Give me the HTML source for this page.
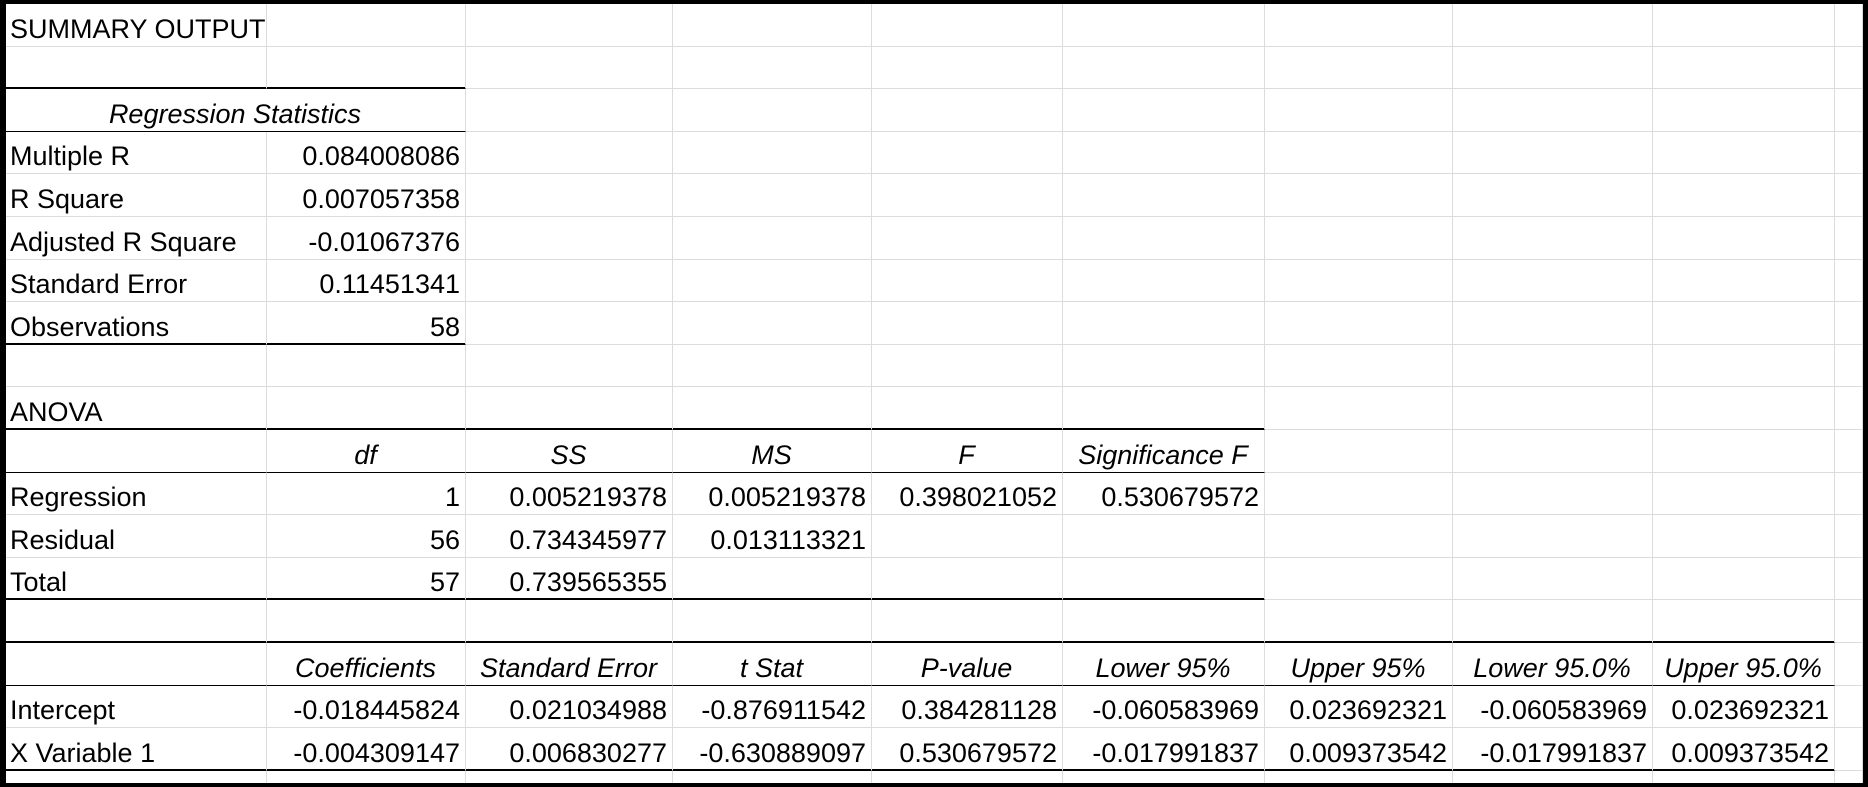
<!DOCTYPE html>
<html><head><meta charset="utf-8"><style>
html,body{margin:0;padding:0;background:#fff;}
#f{position:relative;width:1868px;height:787px;box-sizing:border-box;border:solid #000;border-width:4px 5px 4px 6px;overflow:hidden;background:#fff;}
table{position:absolute;left:0;top:0;width:1857px;border-collapse:separate;border-spacing:0;table-layout:fixed;font-family:"Liberation Sans",sans-serif;font-size:27px;color:#000;}
td{box-sizing:border-box;height:42.6px;border-right:1px solid #dcdcdc;border-bottom:1px solid #dcdcdc;padding:0 5px 0 4px;white-space:nowrap;overflow:hidden;vertical-align:bottom;line-height:34px;}
td.r{text-align:right;}
td.h{text-align:center;font-style:italic;}
td.t{border-bottom-color:#000;}
td.T{border-bottom-color:#000;box-shadow:inset 0 -1px 0 #000;}
</style></head><body><div id="f">
<table>
<colgroup><col style="width:261px"><col style="width:199px"><col style="width:207px"><col style="width:199px"><col style="width:191px"><col style="width:202px"><col style="width:188px"><col style="width:200px"><col style="width:182px"><col style="width:28px"></colgroup>
<tr><td>SUMMARY OUTPUT</td><td></td><td></td><td></td><td></td><td></td><td></td><td></td><td></td><td></td></tr>
<tr><td class="T"></td><td class="T"></td><td></td><td></td><td></td><td></td><td></td><td></td><td></td><td></td></tr>
<tr><td class="h t" colspan="2">Regression Statistics</td><td></td><td></td><td></td><td></td><td></td><td></td><td></td><td></td></tr>
<tr><td>Multiple R</td><td class="r">0.084008086</td><td></td><td></td><td></td><td></td><td></td><td></td><td></td><td></td></tr>
<tr><td>R Square</td><td class="r">0.007057358</td><td></td><td></td><td></td><td></td><td></td><td></td><td></td><td></td></tr>
<tr><td>Adjusted R Square</td><td class="r">-0.01067376</td><td></td><td></td><td></td><td></td><td></td><td></td><td></td><td></td></tr>
<tr><td>Standard Error</td><td class="r">0.11451341</td><td></td><td></td><td></td><td></td><td></td><td></td><td></td><td></td></tr>
<tr><td class="T">Observations</td><td class="r T">58</td><td></td><td></td><td></td><td></td><td></td><td></td><td></td><td></td></tr>
<tr><td></td><td></td><td></td><td></td><td></td><td></td><td></td><td></td><td></td><td></td></tr>
<tr><td class="T">ANOVA</td><td class="T"></td><td class="T"></td><td class="T"></td><td class="T"></td><td class="T"></td><td></td><td></td><td></td><td></td></tr>
<tr><td class="t"></td><td class="h t">df</td><td class="h t">SS</td><td class="h t">MS</td><td class="h t">F</td><td class="h t">Significance F</td><td></td><td></td><td></td><td></td></tr>
<tr><td>Regression</td><td class="r">1</td><td class="r">0.005219378</td><td class="r">0.005219378</td><td class="r">0.398021052</td><td class="r">0.530679572</td><td></td><td></td><td></td><td></td></tr>
<tr><td>Residual</td><td class="r">56</td><td class="r">0.734345977</td><td class="r">0.013113321</td><td></td><td></td><td></td><td></td><td></td><td></td></tr>
<tr><td class="T">Total</td><td class="r T">57</td><td class="r T">0.739565355</td><td class="T"></td><td class="T"></td><td class="T"></td><td></td><td></td><td></td><td></td></tr>
<tr><td class="T"></td><td class="T"></td><td class="T"></td><td class="T"></td><td class="T"></td><td class="T"></td><td class="T"></td><td class="T"></td><td class="T"></td><td></td></tr>
<tr><td class="t"></td><td class="h t">Coefficients</td><td class="h t">Standard Error</td><td class="h t">t Stat</td><td class="h t">P-value</td><td class="h t">Lower 95%</td><td class="h t">Upper 95%</td><td class="h t">Lower 95.0%</td><td class="h t">Upper 95.0%</td><td></td></tr>
<tr><td>Intercept</td><td class="r">-0.018445824</td><td class="r">0.021034988</td><td class="r">-0.876911542</td><td class="r">0.384281128</td><td class="r">-0.060583969</td><td class="r">0.023692321</td><td class="r">-0.060583969</td><td class="r">0.023692321</td><td></td></tr>
<tr><td class="T">X Variable 1</td><td class="r T">-0.004309147</td><td class="r T">0.006830277</td><td class="r T">-0.630889097</td><td class="r T">0.530679572</td><td class="r T">-0.017991837</td><td class="r T">0.009373542</td><td class="r T">-0.017991837</td><td class="r T">0.009373542</td><td></td></tr>
<tr><td></td><td></td><td></td><td></td><td></td><td></td><td></td><td></td><td></td><td></td></tr>
</table>
</div></body></html>
